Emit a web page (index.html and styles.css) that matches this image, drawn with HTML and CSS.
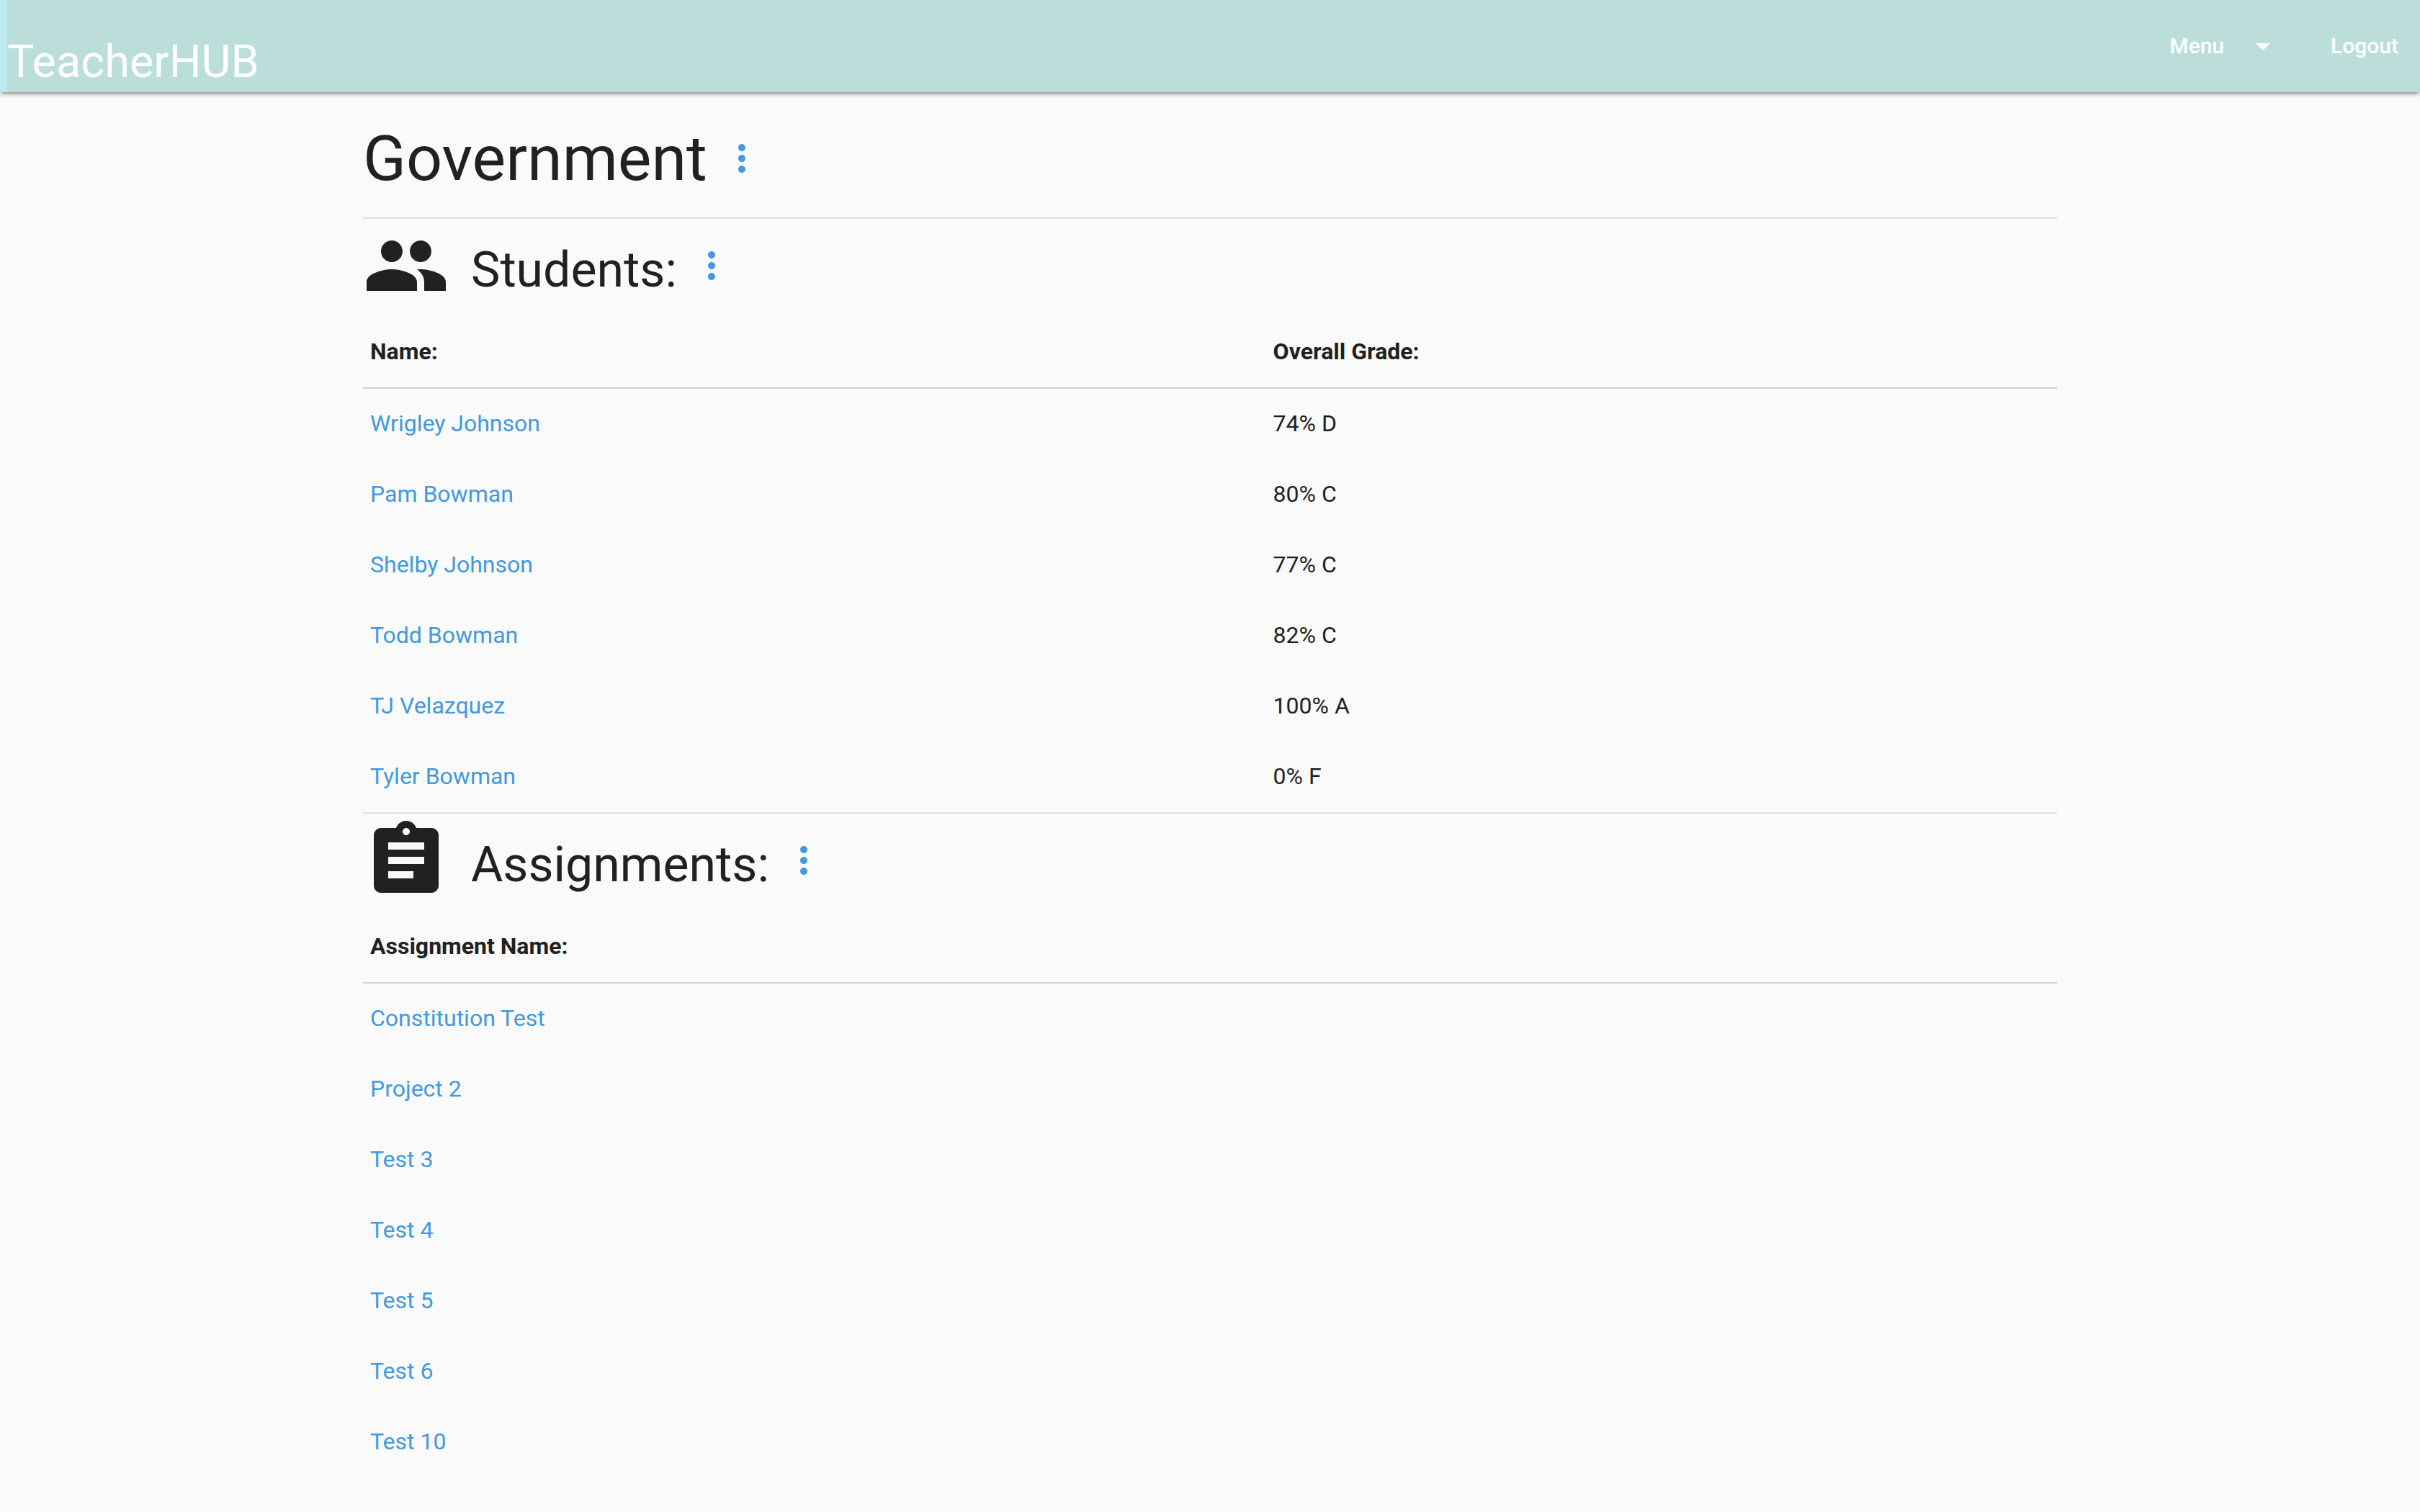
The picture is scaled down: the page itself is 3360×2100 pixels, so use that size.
FILE: index.html
```html
<!DOCTYPE html>
<html lang="en">
<head>
<meta charset="utf-8">
<meta name="viewport" content="width=device-width, initial-scale=1">
<title>TeacherHUB</title>
<link rel="stylesheet" href="styles.css">
</head>
<body>
<nav class="navbar">
  <a class="brand" href="#">TeacherHUB</a>
  <ul class="nav-links">
    <li><button class="nav-link" type="button">Menu
      <svg class="caret" viewBox="0 0 24 24" aria-hidden="true"><path d="M7 10l5 5 5-5z"/></svg></button></li>
    <li><a class="nav-link" href="#">Logout</a></li>
  </ul>
</nav>
<main class="container">
  <header class="page-head">
    <h1 class="page-title">Government</h1>
    <button class="more" type="button" aria-label="Class options"><svg viewBox="0 0 24 24"><path d="M12 8c1.1 0 2-.9 2-2s-.9-2-2-2-2 .9-2 2 .9 2 2 2zm0 2c-1.1 0-2 .9-2 2s.9 2 2 2 2-.9 2-2-.9-2-2-2zm0 6c-1.1 0-2 .9-2 2s.9 2 2 2 2-.9 2-2-.9-2-2-2z"/></svg></button>
  </header>

  <section class="section">
    <div class="section-head">
      <svg class="section-icon" viewBox="0 0 24 24" aria-hidden="true"><path d="M16 11c1.66 0 2.99-1.34 2.99-3S17.66 5 16 5c-1.66 0-3 1.34-3 3s1.34 3 3 3zm-8 0c1.66 0 2.99-1.34 2.99-3S9.66 5 8 5C6.34 5 5 6.34 5 8s1.34 3 3 3zm0 2c-2.33 0-7 1.17-7 3.500V19h14v-2.500c0-2.330-4.670-3.500-7-3.500zm8 0c-.29 0-.62.02-.97.05 1.160.840 1.970 1.970 1.970 3.450V19h6v-2.500c0-2.330-4.670-3.500-7-3.500z"/></svg>
      <h2 class="section-title">Students:</h2>
      <button class="more" type="button" aria-label="Student options"><svg viewBox="0 0 24 24"><path d="M12 8c1.1 0 2-.9 2-2s-.9-2-2-2-2 .9-2 2 .9 2 2 2zm0 2c-1.1 0-2 .9-2 2s.9 2 2 2 2-.9 2-2-.9-2-2-2zm0 6c-1.1 0-2 .9-2 2s.9 2 2 2 2-.9 2-2-.9-2-2-2z"/></svg></button>
    </div>
    <table class="data">
      <thead><tr><th class="name-col" scope="col">Name:</th><th scope="col">Overall Grade:</th></tr></thead>
      <tbody>
        <tr><td><a href="#">Wrigley Johnson</a></td><td>74% D</td></tr>
        <tr><td><a href="#">Pam Bowman</a></td><td>80% C</td></tr>
        <tr><td><a href="#">Shelby Johnson</a></td><td>77% C</td></tr>
        <tr><td><a href="#">Todd Bowman</a></td><td>82% C</td></tr>
        <tr><td><a href="#">TJ Velazquez</a></td><td>100% A</td></tr>
        <tr><td><a href="#">Tyler Bowman</a></td><td>0% F</td></tr>
      </tbody>
    </table>
  </section>

  <section class="section">
    <div class="section-head">
      <svg class="section-icon" viewBox="0 0 24 24" aria-hidden="true"><path d="M19 3h-4.180C14.400 1.840 13.300 1 12 1c-1.300 0-2.400.84-2.820 2H5c-1.100 0-2 .9-2 2v14c0 1.100.9 2 2 2h14c1.100 0 2-.9 2-2V5c0-1.100-.9-2-2-2zm-7 0c.55 0 1 .45 1 1s-.45 1-1 1-1-.45-1-1 .45-1 1-1zm2 14H7v-2h7v2zm3-4H7v-2h10v2zm0-4H7V7h10v2z"/></svg>
      <h2 class="section-title">Assignments:</h2>
      <button class="more" type="button" aria-label="Assignment options"><svg viewBox="0 0 24 24"><path d="M12 8c1.1 0 2-.9 2-2s-.9-2-2-2-2 .9-2 2 .9 2 2 2zm0 2c-1.1 0-2 .9-2 2s.9 2 2 2 2-.9 2-2-.9-2-2-2zm0 6c-1.1 0-2 .9-2 2s.9 2 2 2 2-.9 2-2-.9-2-2-2z"/></svg></button>
    </div>
    <table class="data">
      <thead><tr><th scope="col">Assignment Name:</th></tr></thead>
      <tbody>
        <tr><td><a href="#">Constitution Test</a></td></tr>
        <tr><td><a href="#">Project 2</a></td></tr>
        <tr><td><a href="#">Test 3</a></td></tr>
        <tr><td><a href="#">Test 4</a></td></tr>
        <tr><td><a href="#">Test 5</a></td></tr>
        <tr><td><a href="#">Test 6</a></td></tr>
        <tr><td><a href="#">Test 10</a></td></tr>
      </tbody>
    </table>
  </section>
</main>
</body>
</html>
```
FILE: styles.css
```css
* {
  box-sizing: border-box;
}

body {
  margin: 0;
  background: #fafafa;
  color: #212121;
  font-family: Roboto, "Liberation Sans", sans-serif;
  font-size: 32px;
  line-height: 48px;
}

a {
  color: #4299e1;
  text-decoration: none;
}

button {
  padding: 0;
  border: 0;
  background: none;
  font: inherit;
  cursor: pointer;
}

svg {
  display: block;
  fill: currentColor;
}

/* Top bar */
.navbar {
  display: flex;
  justify-content: space-between;
  height: 128px;
  border-left: 10px solid #bbeaf1;
  background: #bbdeda;
  box-shadow: 0 4px 4px rgba(0, 0, 0, 0.14), 0 2px 10px rgba(0, 0, 0, 0.12), 0 6px 2px -4px rgba(0, 0, 0, 0.2);
}

.brand {
  padding-top: 44px;
  color: #fff;
  font-size: 63px;
  line-height: 84px;
}

.nav-links {
  display: flex;
  gap: 10px;
  margin: 0;
  padding: 0;
  list-style: none;
}

.nav-link {
  display: flex;
  align-items: center;
  gap: 30px;
  height: 128px;
  padding: 0 30px;
  color: #fff;
  font-size: 30px;
  font-weight: 500;
}

.caret {
  width: 48px;
  height: 48px;
}

/* Content column */
.container {
  width: 70%;
  margin: 0 auto;
}

.page-head {
  display: flex;
  align-items: center;
  gap: 18px;
  height: 174px;
  padding-top: 10px;
}

.page-title,
.section-title {
  margin: 0;
  font-weight: 400;
}

.page-title {
  font-size: 88px;
  line-height: 96px;
}

.more {
  color: #4299e1;
}

.more svg {
  width: 60px;
  height: 60px;
}

.section {
  border-top: 2px solid #e0e0e0;
}

.section-head {
  display: flex;
  align-items: center;
  height: 136px;
  padding-bottom: 6px;
}

.section-icon {
  width: 120px;
  height: 120px;
}

.section-title {
  padding: 12px 18px 0 30px;
  font-size: 68px;
  line-height: 76px;
}

/* Tables */
.data {
  width: 100%;
  border-collapse: collapse;
}

.data thead {
  border-bottom: 2px solid #d0d0d0;
}

.data th,
.data td {
  padding: 24px 10px 26px;
  text-align: left;
}

.data th {
  font-weight: 700;
}

.name-col {
  width: 53.3%;
}
```
